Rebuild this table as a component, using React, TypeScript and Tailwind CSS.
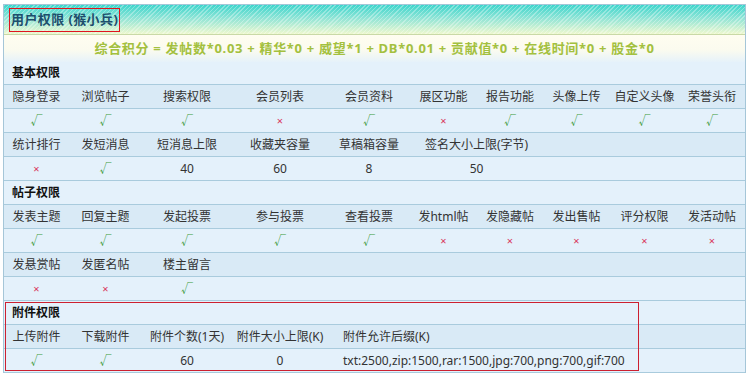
import React from "react";

type Cell = { text: string; span?: number; left?: boolean };
type Val = "y" | "n" | string;

const Y = "y";
const N = "n";

const spanClass: Record<number, string> = {
    1: "col-span-1",
    2: "col-span-2",
    6: "col-span-6",
};

function HeadRow({ cells }: { cells: Cell[] }) {
    return (
        <div className="grid grid-cols-[65px_73px_90px_96px_82px_67px_66px_67px_69px_1fr] h-[24px] bg-[#d9eaf6] border-b border-[#a9cbdd] text-[#333]">
            {cells.map((c, i) => (
                <div
                    key={i}
                    className={`${spanClass[c.span || 1]} flex items-center whitespace-nowrap ${c.left ? "justify-start pl-[15px]" : "justify-center"}`}
                >
                    {c.text}
                </div>
            ))}
        </div>
    );
}

function ValRow({ vals, spans, lefts }: { vals: Val[]; spans?: number[]; lefts?: boolean[] }) {
    return (
        <div className="grid grid-cols-[65px_73px_90px_96px_82px_67px_66px_67px_69px_1fr] h-[24px] bg-[#e4f1fb] border-b border-[#a9cbdd] text-[#333]">
            {vals.map((v, i) => {
                const span = spans ? spans[i] : 1;
                const left = lefts ? lefts[i] : false;
                let inner: React.ReactNode = v;
                if (v === Y) inner = <span className="text-[#3c9a3c] text-[12px]">√</span>;
                if (v === N) inner = <span className="text-[#d9375d] text-[11px]">×</span>;
                return (
                    <div
                        key={i}
                        className={`${spanClass[span]} flex items-center whitespace-nowrap ${left ? "justify-start pl-[15px]" : "justify-center"}`}
                    >
                        {inner}
                    </div>
                );
            })}
        </div>
    );
}

function Section({ title, short }: { title: string; short?: boolean }) {
    return (
        <div
            className={`${short ? "h-[23px]" : "h-[24px]"} flex items-center pl-[8px] bg-[#e4f1fb] border-b border-[#a9cbdd] font-bold text-[#111]`}
        >
            {title}
        </div>
    );
}

const h = (t: string[]): Cell[] => t.map((text) => ({ text }));

export default function App() {
    return (
        <div className="w-[750px] h-[373px] bg-white pt-[4px] pl-[3px] text-[12px] font-['Noto_Sans','Noto_Sans_CJK_SC',sans-serif] leading-none">
            <div className="w-[743px] border-x border-t border-[#a5c6d8] bg-[#e4f1fb]">
                {/* title band */}
                <div className="h-[30px] flex items-center pl-[5px] border-b border-[#c9d9a6] bg-[repeating-linear-gradient(135deg,rgba(255,255,255,0.32)_0px,rgba(255,255,255,0.32)_1px,transparent_1px,transparent_3px),linear-gradient(to_bottom,#3dd5cc,#8fe4d6_45%,#eef8cf)]">
                    <span className="border border-[#e0141e] h-[24px] w-[111px] flex items-center pl-[1px] font-bold text-[13px] tracking-[0.4px] text-[#1d4e6c] whitespace-nowrap">
                        用户权限 (猴小兵)
                    </span>
                </div>

                {/* formula */}
                <div className="h-[27px] flex items-center justify-center bg-[linear-gradient(to_bottom,#fffdf0,#fbfbef_55%,#e6f2fa)] font-bold text-[13px] tracking-[0.7px] text-[#a3c03e] whitespace-nowrap">
                    综合积分 = 发帖数*0.03 + 精华*0 + 威望*1 + DB*0.01 + 贡献值*0 + 在线时间*0 + 股金*0
                </div>

                <Section title="基本权限" short />
                <HeadRow cells={h(["隐身登录", "浏览帖子", "搜索权限", "会员列表", "会员资料", "展区功能", "报告功能", "头像上传", "自定义头像", "荣誉头衔"])} />
                <ValRow vals={[Y, Y, Y, N, Y, N, Y, Y, Y, Y]} />
                <HeadRow
                    cells={[
                        { text: "统计排行" },
                        { text: "发短消息" },
                        { text: "短消息上限" },
                        { text: "收藏夹容量" },
                        { text: "草稿箱容量" },
                        { text: "签名大小上限(字节)", span: 2 },
                    ]}
                />
                <ValRow vals={[N, Y, "40", "60", "8", "50"]} spans={[1, 1, 1, 1, 1, 2]} />

                <Section title="帖子权限" />
                <HeadRow cells={h(["发表主题", "回复主题", "发起投票", "参与投票", "查看投票", "发html帖", "发隐藏帖", "发出售帖", "评分权限", "发活动帖"])} />
                <ValRow vals={[Y, Y, Y, Y, Y, N, N, N, N, N]} />
                <HeadRow cells={h(["发悬赏帖", "发匿名帖", "楼主留言"])} />
                <ValRow vals={[N, N, Y]} />

                <div className="relative">
                    <Section title="附件权限" />
                    <HeadRow
                        cells={[
                            { text: "上传附件" },
                            { text: "下载附件" },
                            { text: "附件个数(1天)" },
                            { text: "附件大小上限(K)" },
                            { text: "附件允许后缀(K)", span: 6, left: true },
                        ]}
                    />
                    <ValRow
                        vals={[Y, Y, "60", "0", "txt:2500,zip:1500,rar:1500,jpg:700,png:700,gif:700"]}
                        spans={[1, 1, 1, 1, 6]}
                        lefts={[false, false, false, false, true]}
                    />
                    {/* red annotation box */}
                    <div className="absolute left-[1px] top-[1px] w-[634px] h-[69px] border-[1.5px] border-[#cc2030] pointer-events-none" />
                </div>
            </div>
        </div>
    );
}
